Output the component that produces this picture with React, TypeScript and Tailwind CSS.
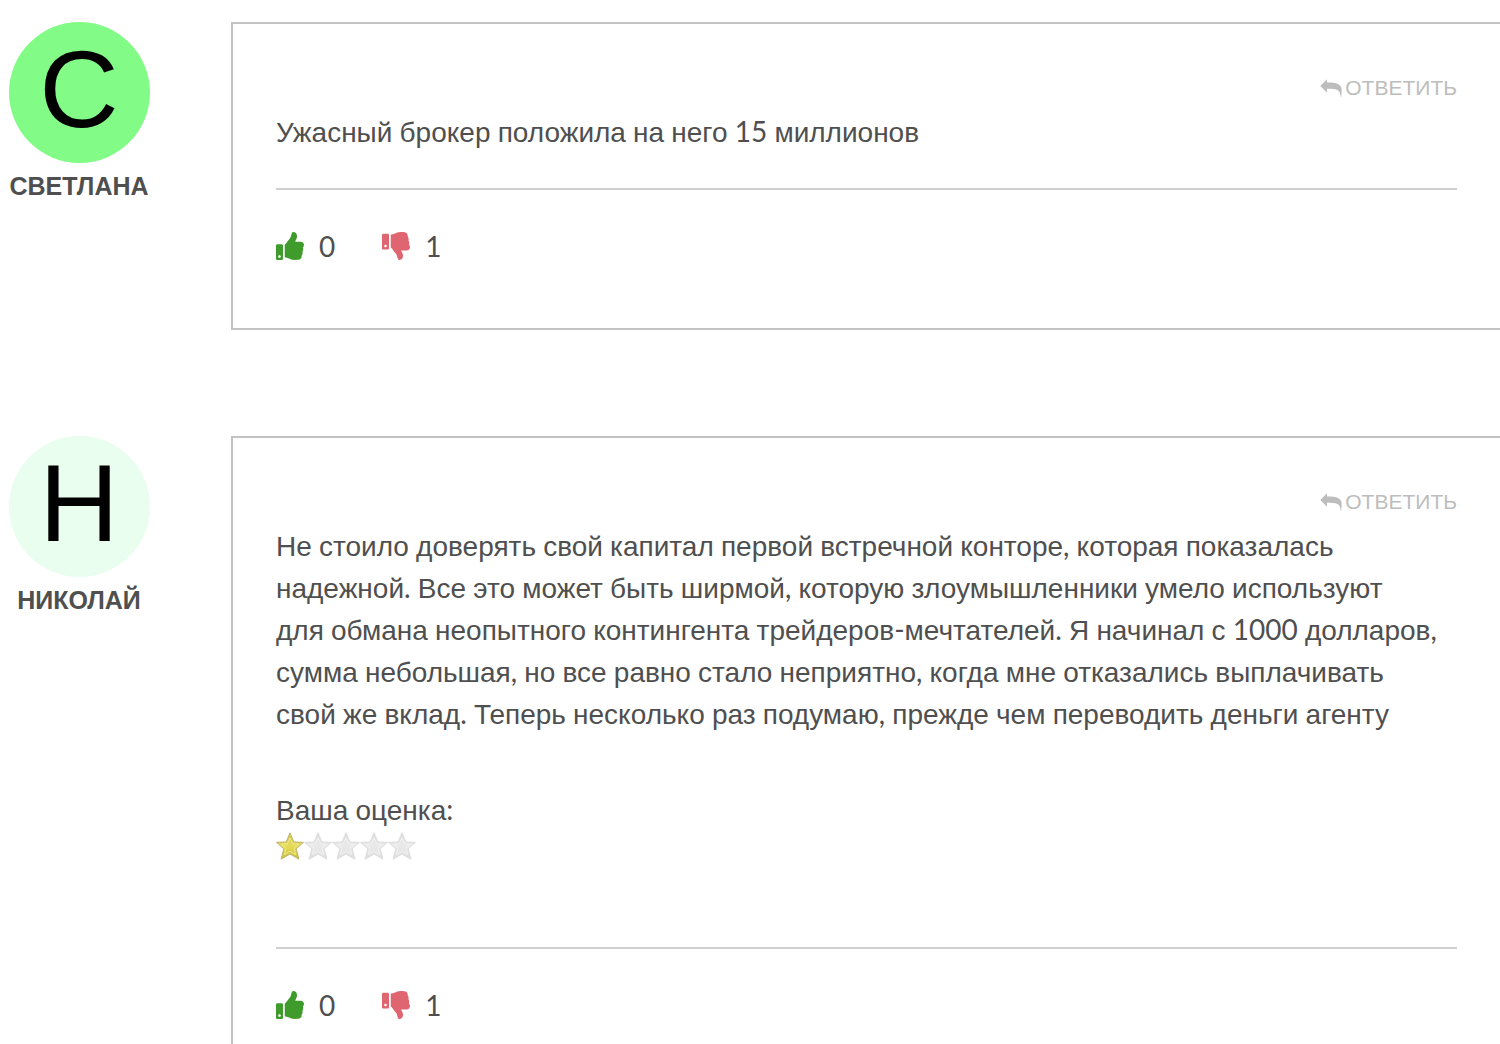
// src/App.tsx
import { FaThumbsDown, FaThumbsUp } from "react-icons/fa"

interface Comment {
  id: number
  author: string
  avatarClass: string
  lines: string[]
  rating?: number
  likes: number
  dislikes: number
}

const comments: Comment[] = [
  {
    id: 1,
    author: "Светлана",
    avatarClass: "bg-[#82fc87]",
    lines: ["Ужасный брокер положила на него 15 миллионов"],
    likes: 0,
    dislikes: 1
  },
  {
    id: 2,
    author: "Николай",
    avatarClass: "bg-[#e9feee]",
    lines: [
      "Не стоило доверять свой капитал первой встречной конторе, которая показалась",
      "надежной. Все это может быть ширмой, которую злоумышленники умело используют",
      "для обмана неопытного контингента трейдеров-мечтателей. Я начинал с 1000 долларов,",
      "сумма небольшая, но все равно стало неприятно, когда мне отказались выплачивать",
      "свой же вклад. Теперь несколько раз подумаю, прежде чем переводить деньги агенту"
    ],
    rating: 1,
    likes: 0,
    dislikes: 1
  }
]

// Cyrillic words are set in Liberation Sans, everything between them in Lato
function MixedText({ text }: { text: string }) {
  return (
    <>
      {text.split(/([А-Яа-яЁё]+)/).map((part, idx) =>
        idx % 2 === 1 ? (
          <span key={idx} className="font-['Liberation_Sans',sans-serif] leading-none">{part}</span>
        ) : (
          part
        )
      )}
    </>
  )
}

function ReplyIcon() {
  return (
    <svg viewBox="0 0 22 20" className="w-[22px] h-5" fill="currentColor" aria-hidden="true">
      <path d="M.3 8 7 1.300v3.300c4.500 0 8.700.1 11.700 1.800 3 1.600 3.700 4.600 2.300 13.300-.6-3.600-1-6.400-3.600-7.700C14.900 10.700 11 10.700 7 10.700v4z" />
    </svg>
  )
}

function Star({ filled }: { filled: boolean }) {
  return (
    <svg viewBox="0 0 28 28" className="w-7 h-7" aria-hidden="true">
      <defs>
        <linearGradient id="star-on" x1="0" y1="0" x2="0" y2="1">
          <stop offset="0" stopColor="#cfc258" />
          <stop offset="0.5" stopColor="#e6dc58" />
          <stop offset="1" stopColor="#c9bd3c" />
        </linearGradient>
        <linearGradient id="star-off" x1="0" y1="0" x2="0" y2="1">
          <stop offset="0" stopColor="#dadada" />
          <stop offset="0.5" stopColor="#e9e9e9" />
          <stop offset="1" stopColor="#dedede" />
        </linearGradient>
      </defs>
      <path
        d="M14 .8 17.900 10 27.500 10.300 20.200 16.800 22.900 27.200 14 22 5.100 27.200 7.800 16.800 .5 10.300 10.100 10z"
        fill={filled ? "url(#star-on)" : "url(#star-off)"}
        stroke={filled ? "#c0b56c" : "#dcdcdc"}
        strokeLinejoin="round"
      />
      <path
        d="M14 6 16.600 12 22.500 12.200 17.900 16.100 19.700 22.600 14 19.200 8.300 22.600 10.100 16.100 5.500 12.200 11.400 12z"
        fill="none"
        stroke={filled ? "#f1ea8c" : "#f3f3f3"}
        strokeLinejoin="round"
      />
    </svg>
  )
}

function CommentItem({ comment }: { comment: Comment }) {
  return (
    <article className="flex items-start">
      {/* Avatar and name */}
      <div className="flex w-[158px] shrink-0 flex-col items-center font-['Liberation_Sans',sans-serif]">
        <div className={`flex size-[141px] items-center justify-center rounded-full pb-2 text-[110px] leading-none text-black ${comment.avatarClass}`}>
          {comment.author[0]}
        </div>
        <div className="mt-[7px] text-[25px] leading-8 font-bold uppercase">{comment.author}</div>
      </div>

      {/* Comment body */}
      <div className="ml-[73px] flex-1 border-y-2 border-l-2 border-[#c2c2c2] pt-[46px] pr-[43px] pb-[61px] pl-[43px]">
        <div className="flex h-10 items-start justify-end">
          <button type="button" className="flex h-9 items-center gap-[3px] font-['Liberation_Sans',sans-serif] text-[21px] uppercase text-[#bdbdbd]">
            <ReplyIcon />
            Ответить
          </button>
        </div>

        <p className="whitespace-nowrap">
          {comment.lines.map((line) => (
            <span key={line} className="block">
              <MixedText text={line} />
            </span>
          ))}
        </p>

        {comment.rating !== undefined && (
          <div className="mt-[54px] mb-[87px]">
            <div>
              <MixedText text="Ваша оценка:" />
            </div>
            <div className="mt-0.5 flex" role="img" aria-label={`${comment.rating} / 5`}>
              {[1, 2, 3, 4, 5].map((value) => (
                <Star key={value} filled={value <= comment.rating!} />
              ))}
            </div>
          </div>
        )}

        <hr className="mt-9 border-t-2 border-[#d0d0d0]" />

        {/* Votes */}
        <div className="mt-[35px] flex gap-[47px]">
          <button type="button" className="flex items-center gap-[15px]">
            <FaThumbsUp className="size-7 text-[#3f9b2b]" />
            {comment.likes}
          </button>
          <button type="button" className="flex items-center gap-[15px]">
            <FaThumbsDown className="size-7 text-[#df6570]" />
            {comment.dislikes}
          </button>
        </div>
      </div>
    </article>
  )
}

export default function App() {
  return (
    <main className="flex h-screen flex-col gap-[106px] overflow-hidden bg-white pt-[22px] font-['Lato','Liberation_Sans',sans-serif] text-[28px] leading-[42px] text-[#4f4f4f]">
      {comments.map((comment) => (
        <CommentItem key={comment.id} comment={comment} />
      ))}
    </main>
  )
}
